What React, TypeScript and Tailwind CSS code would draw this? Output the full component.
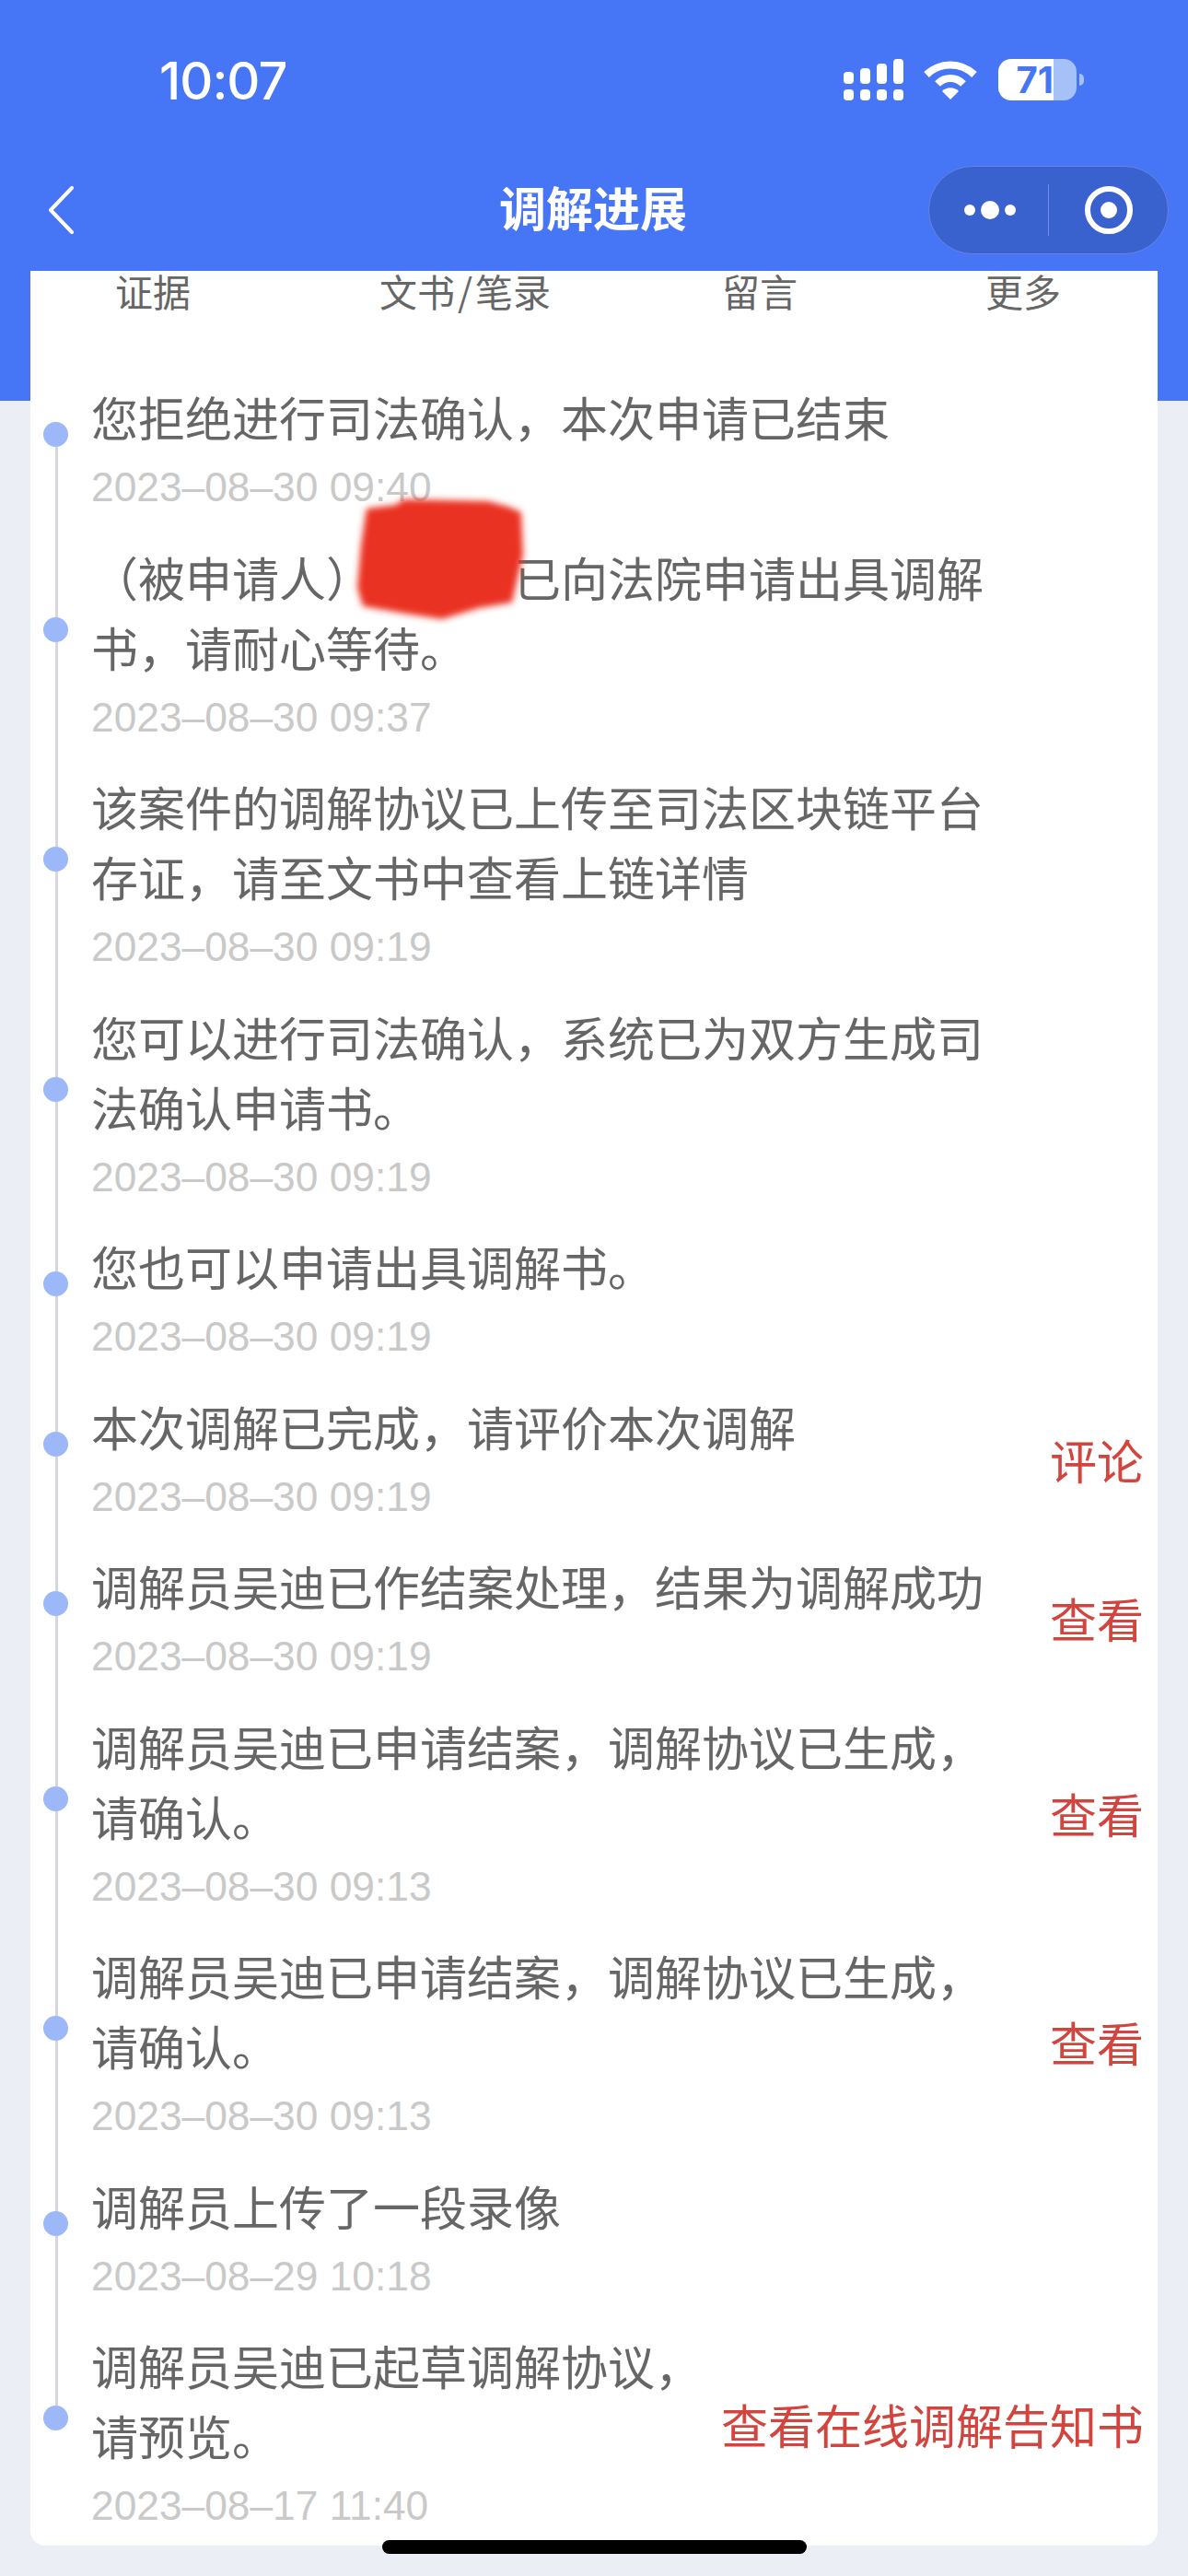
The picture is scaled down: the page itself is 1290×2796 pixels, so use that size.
const cjk = "font-['Noto_Sans_CJK_SC','Liberation_Sans',sans-serif]";

type Entry = {
  lines: React.ReactNode[];
  date: string;
  action?: string;
  actionTop?: string;
};

const entries: Entry[] = [
  { lines: ["您拒绝进行司法确认，本次申请已结束"], date: "2023–08–30 09:40" },
  {
    lines: [
      <>
        （被申请人）<span className="inline-block w-[153px]" />已向法院申请出具调解
      </>,
      "书，请耐心等待。",
    ],
    date: "2023–08–30 09:37",
  },
  { lines: ["该案件的调解协议已上传至司法区块链平台", "存证，请至文书中查看上链详情"], date: "2023–08–30 09:19" },
  { lines: ["您可以进行司法确认，系统已为双方生成司", "法确认申请书。"], date: "2023–08–30 09:19" },
  { lines: ["您也可以申请出具调解书。"], date: "2023–08–30 09:19" },
  { lines: ["本次调解已完成，请评价本次调解"], date: "2023–08–30 09:19", action: "评论", actionTop: "mt-[36px]" },
  { lines: ["调解员吴迪已作结案处理，结果为调解成功"], date: "2023–08–30 09:19", action: "查看", actionTop: "mt-[35px]" },
  { lines: ["调解员吴迪已申请结案，调解协议已生成，", "请确认。"], date: "2023–08–30 09:13", action: "查看", actionTop: "mt-[73px]" },
  { lines: ["调解员吴迪已申请结案，调解协议已生成，", "请确认。"], date: "2023–08–30 09:13", action: "查看", actionTop: "mt-[72px]" },
  { lines: ["调解员上传了一段录像"], date: "2023–08–29 10:18" },
  { lines: ["调解员吴迪已起草调解协议，", "请预览。"], date: "2023–08–17 11:40", action: "查看在线调解告知书", actionTop: "mt-[64px]" },
];

const StatusIcons = () => (
  <div className="flex items-start">
    {/* signal */}
    <svg width="65" height="45" viewBox="0 0 65 45" fill="white" className="mr-[22px]">
      <rect x="0" y="14" width="11" height="13" rx="4" />
      <rect x="18" y="10" width="11" height="17" rx="4" />
      <rect x="36" y="5" width="11" height="22" rx="4" />
      <rect x="54" y="0" width="11" height="27" rx="4" />
      <rect x="0" y="33" width="11" height="12" rx="4" />
      <rect x="18" y="33" width="11" height="12" rx="4" />
      <rect x="36" y="33" width="11" height="12" rx="4" />
      <rect x="54" y="33" width="11" height="12" rx="4" />
    </svg>
    {/* wifi */}
    <svg width="58" height="42" viewBox="0 0 58 42" className="mt-[2px] mr-[23px]">
      <path d="M3 15 C18 1 40 1 55 15" fill="none" stroke="white" strokeWidth="8" />
      <path d="M15 25 C23 17 35 17 43 25" fill="none" stroke="white" strokeWidth="8" />
      <path d="M20 33 C25 28 33 28 38 33 L29 42 Z" fill="white" />
    </svg>
    {/* battery */}
    <div className="flex h-[45px] w-[85px]">
      <div className="flex h-full w-[60px] items-center justify-end rounded-l-[14px] bg-white">
        <span className="font-['Inter',sans-serif] text-[40px] font-bold leading-[45px] text-[#4675f6]">71</span>
      </div>
      <div className="h-full flex-1 rounded-r-[14px] bg-[#a6c0f8]" />
    </div>
    <div className="ml-[3px] mt-[16px] h-[13px] w-[5px] rounded-r-full bg-[#a6c0f8]" />
  </div>
);

const Capsule = () => (
  <div className="flex h-[96px] w-[261px] items-center rounded-full border border-[#6385e4] bg-[#3a62cf]">
    <div className="flex flex-1 items-center justify-center gap-[6px] pl-[2px]">
      <span className="h-[12px] w-[12px] rounded-full bg-white" />
      <span className="h-[20px] w-[20px] rounded-full bg-white" />
      <span className="h-[12px] w-[12px] rounded-full bg-white" />
    </div>
    <div className="h-[56px] w-px bg-[#7291e6]" />
    <div className="flex w-[129px] items-center justify-center">
      <div className="flex h-[52px] w-[52px] items-center justify-center rounded-full border-[6px] border-white">
        <span className="h-[18px] w-[18px] rounded-full bg-white" />
      </div>
    </div>
  </div>
);

const Row = ({ entry }: { entry: Entry }) => (
  <div className="flex items-start">
    <div className="min-w-0 flex-1">
      <div className="relative text-[51px] leading-[76px] text-[#666666] whitespace-nowrap">
        <span className="absolute left-[-52px] top-1/2 mt-[6px] h-[27px] w-[27px] rounded-full bg-[#9db8f8]" />
        {entry.lines.map((line, i) => (
          <div key={i}>{line}</div>
        ))}
      </div>
      <div className="h-[97.5px] pt-[6px] font-['Liberation_Sans',sans-serif] text-[44.3px] leading-[66px] text-[#c9c9c9]">
        {entry.date}
      </div>
    </div>
    {entry.action && (
      <div className={`shrink-0 text-[51px] leading-[76px] text-[#d2453f] ${entry.actionTop}`}>
        {entry.action}
      </div>
    )}
  </div>
);

export default function App() {
  return (
    <div className={`relative h-[2796px] w-[1290px] overflow-hidden bg-[#eceef5] ${cjk}`}>
      {/* header */}
      <div className="h-[435px] bg-[#4675f6] px-[52px] pt-[64px]">
        <div className="flex items-start justify-between">
          <div className="ml-[121px] font-['Inter',sans-serif] text-[56px] font-medium leading-[48px] tracking-[-1px] text-white">
            10:07
          </div>
          <div className="mr-[61px]">
            <StatusIcons />
          </div>
        </div>
        <div className="relative mt-[68px] flex items-center justify-between">
          <svg width="28" height="52" viewBox="0 0 28 52" fill="none" stroke="white" strokeWidth="4" strokeLinecap="round" strokeLinejoin="round">
            <path d="M26 2 L3 26 L26 50" />
          </svg>
          <div className="absolute left-[490px] top-[6px] text-[51px] font-bold leading-[76px] text-white">
            调解进展
          </div>
          <div className="mr-[-31px]">
            <Capsule />
          </div>
        </div>
      </div>

      {/* card */}
      <div className="relative mx-[33px] mt-[-141px] h-[2469px] rounded-b-[16px] bg-white">
        {/* tabs */}
        <div className="flex h-[120px] items-start pl-[92px] text-[41px] leading-[42px] text-[#666666]">
          <div>证据</div>
          <div className="ml-[205px]">
            文书<span className="mx-[3px]">/</span>笔录
          </div>
          <div className="ml-[186px]">留言</div>
          <div className="ml-[204px]">更多</div>
        </div>

        {/* timeline */}
        <div className="relative pl-[66px] pr-[15px]">
          <div className="absolute bottom-[150px] left-[27px] top-[57px] w-[3px] bg-[#d6d7dc]" />
          {entries.map((entry, i) => (
            <Row key={i} entry={entry} />
          ))}
        </div>

        {/* redaction */}
        <svg width="200" height="150" viewBox="0 0 200 150" className="absolute left-[347px] top-[238px]">
          <defs>
            <filter id="smudge">
              <feGaussianBlur stdDeviation="3.5" />
            </filter>
          </defs>
          <path
            d="M18 20 L50 16 L58 10 L150 12 L172 18 L186 24 L188 70 L176 122 L140 128 L100 140 L60 134 L14 126 L8 106 L12 60 Z"
            fill="#ea3323"
            filter="url(#smudge)"
          />
        </svg>
      </div>

      {/* home indicator */}
      <div className="absolute bottom-[24px] left-[415px] h-[15px] w-[461px] rounded-full bg-black" />
    </div>
  );
}
